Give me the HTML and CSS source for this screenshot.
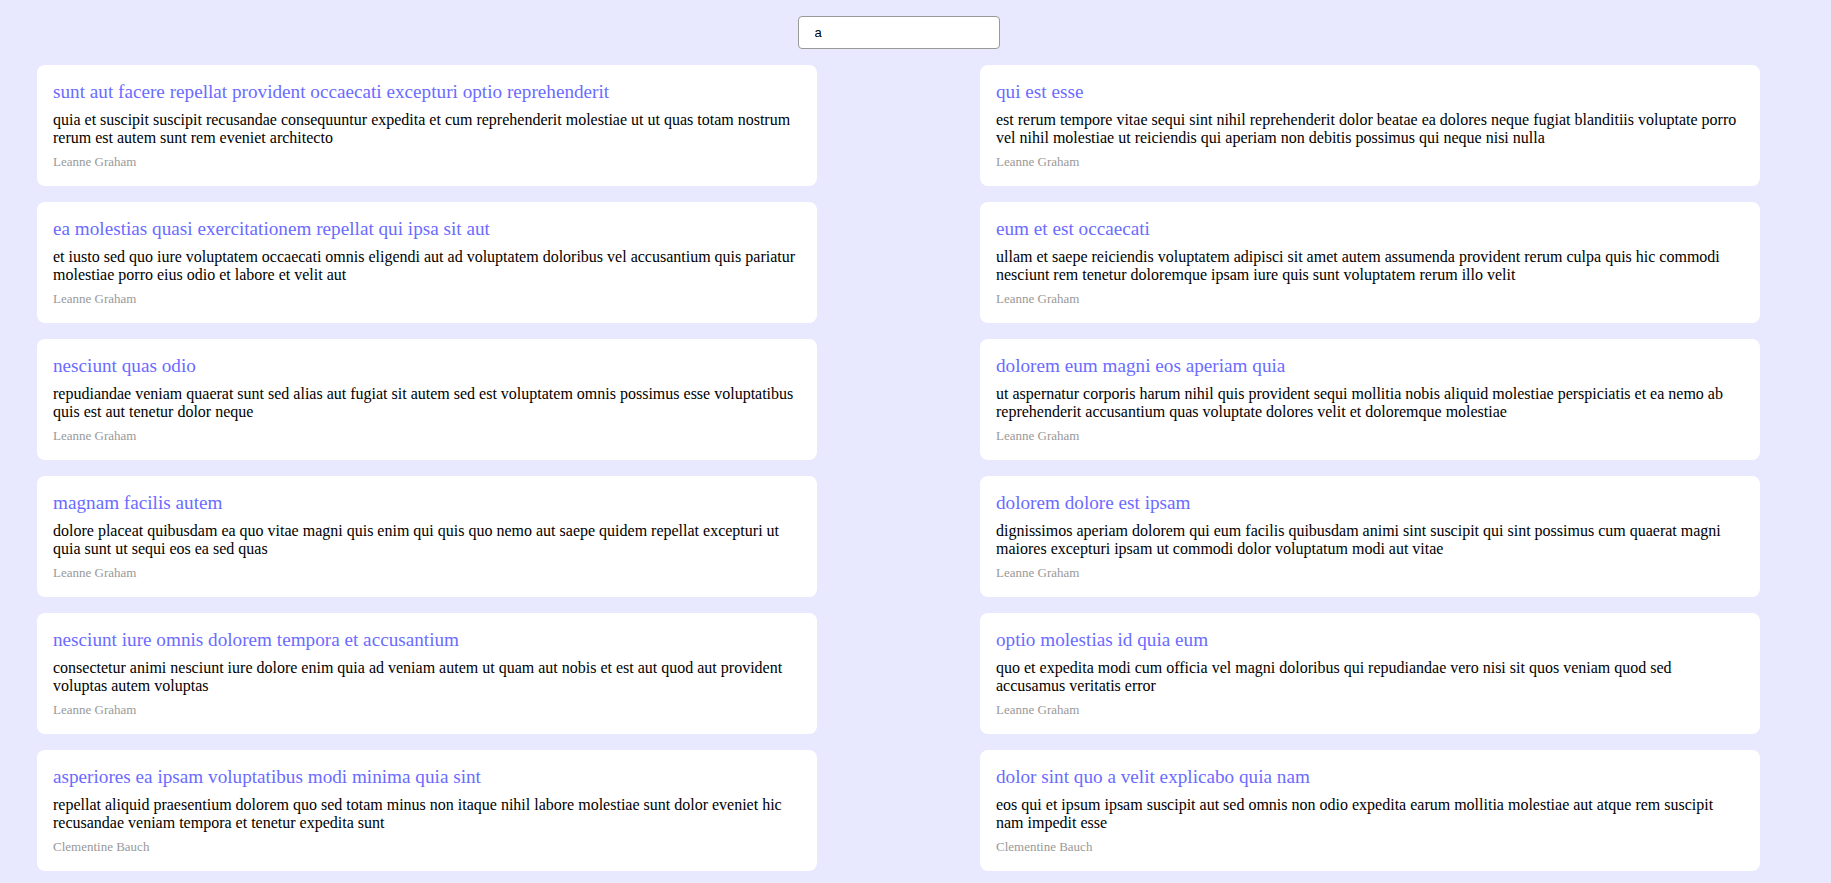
FILE: index.html
```html
<!DOCTYPE html>
<html>
<head>
<meta charset="utf-8">
<link rel="stylesheet" href="styles.css">
</head>
<body>
<div class="page">
  <div class="search-row"><input class="search" type="text" value="a"></div>
  <div class="grid">
    <div class="card"><div class="title">sunt aut facere repellat provident occaecati excepturi optio reprehenderit</div><div class="body">quia et suscipit suscipit recusandae consequuntur expedita et cum reprehenderit molestiae ut ut quas totam nostrum rerum est autem sunt rem eveniet architecto</div><div class="author">Leanne Graham</div></div>
    <div class="card"><div class="title">qui est esse</div><div class="body">est rerum tempore vitae sequi sint nihil reprehenderit dolor beatae ea dolores neque fugiat blanditiis voluptate porro vel nihil molestiae ut reiciendis qui aperiam non debitis possimus qui neque nisi nulla</div><div class="author">Leanne Graham</div></div>
    <div class="card"><div class="title">ea molestias quasi exercitationem repellat qui ipsa sit aut</div><div class="body">et iusto sed quo iure voluptatem occaecati omnis eligendi aut ad voluptatem doloribus vel accusantium quis pariatur molestiae porro eius odio et labore et velit aut</div><div class="author">Leanne Graham</div></div>
    <div class="card"><div class="title">eum et est occaecati</div><div class="body">ullam et saepe reiciendis voluptatem adipisci sit amet autem assumenda provident rerum culpa quis hic commodi nesciunt rem tenetur doloremque ipsam iure quis sunt voluptatem rerum illo velit</div><div class="author">Leanne Graham</div></div>
    <div class="card"><div class="title">nesciunt quas odio</div><div class="body">repudiandae veniam quaerat sunt sed alias aut fugiat sit autem sed est voluptatem omnis possimus esse voluptatibus quis est aut tenetur dolor neque</div><div class="author">Leanne Graham</div></div>
    <div class="card"><div class="title">dolorem eum magni eos aperiam quia</div><div class="body">ut aspernatur corporis harum nihil quis provident sequi mollitia nobis aliquid molestiae perspiciatis et ea nemo ab reprehenderit accusantium quas voluptate dolores velit et doloremque molestiae</div><div class="author">Leanne Graham</div></div>
    <div class="card"><div class="title">magnam facilis autem</div><div class="body">dolore placeat quibusdam ea quo vitae magni quis enim qui quis quo nemo aut saepe quidem repellat excepturi ut quia sunt ut sequi eos ea sed quas</div><div class="author">Leanne Graham</div></div>
    <div class="card"><div class="title">dolorem dolore est ipsam</div><div class="body">dignissimos aperiam dolorem qui eum facilis quibusdam animi sint suscipit qui sint possimus cum quaerat magni maiores excepturi ipsam ut commodi dolor voluptatum modi aut vitae</div><div class="author">Leanne Graham</div></div>
    <div class="card"><div class="title">nesciunt iure omnis dolorem tempora et accusantium</div><div class="body">consectetur animi nesciunt iure dolore enim quia ad veniam autem ut quam aut nobis et est aut quod aut provident voluptas autem voluptas</div><div class="author">Leanne Graham</div></div>
    <div class="card"><div class="title">optio molestias id quia eum</div><div class="body">quo et expedita modi cum officia vel magni doloribus qui repudiandae vero nisi sit quos veniam quod sed accusamus veritatis error</div><div class="author">Leanne Graham</div></div>
    <div class="card"><div class="title">asperiores ea ipsam voluptatibus modi minima quia sint</div><div class="body">repellat aliquid praesentium dolorem quo sed totam minus non itaque nihil labore molestiae sunt dolor eveniet hic recusandae veniam tempora et tenetur expedita sunt</div><div class="author">Clementine Bauch</div></div>
    <div class="card"><div class="title">dolor sint quo a velit explicabo quia nam</div><div class="body">eos qui et ipsum ipsam suscipit aut sed omnis non odio expedita earum mollitia molestiae aut atque rem suscipit nam impedit esse</div><div class="author">Clementine Bauch</div></div>
  </div>
</div>
</body>
</html>
```

FILE: styles.css
```css
html, body {
  margin: 0;
  padding: 0;
  background: #e8e8ff;
}
body {
  font-family: "Liberation Serif", "Times New Roman", serif;
  overflow: hidden;
}
.page {
  width: 1723px;
  margin-left: 37px;
  padding-top: 16px;
}
.search-row {
  display: flex;
  justify-content: center;
  margin-bottom: 16px;
}
.search {
  box-sizing: border-box;
  width: 202px;
  height: 33px;
  border: 1px solid #999;
  border-radius: 4px;
  padding: 0 16px;
  font-family: "Liberation Sans", Arial, sans-serif;
  font-size: 13px;
  color: #000;
  background: #fff;
  outline: none;
}
.grid {
  display: grid;
  grid-template-columns: 780px 780px;
  column-gap: 163px;
  row-gap: 16px;
}
.card {
  box-sizing: border-box;
  height: 121px;
  background: #fff;
  border-radius: 8px;
  padding: 16px 16px 0 16px;
}
.title {
  font-size: 19.2px;
  color: #6b6bff;
  line-height: 22px;
  margin-bottom: 8px;
}
.body {
  font-size: 16px;
  color: #000;
  line-height: 18px;
}
.author {
  font-size: 13px;
  line-height: 15px;
  color: #999;
  margin-top: 7px;
}
```
